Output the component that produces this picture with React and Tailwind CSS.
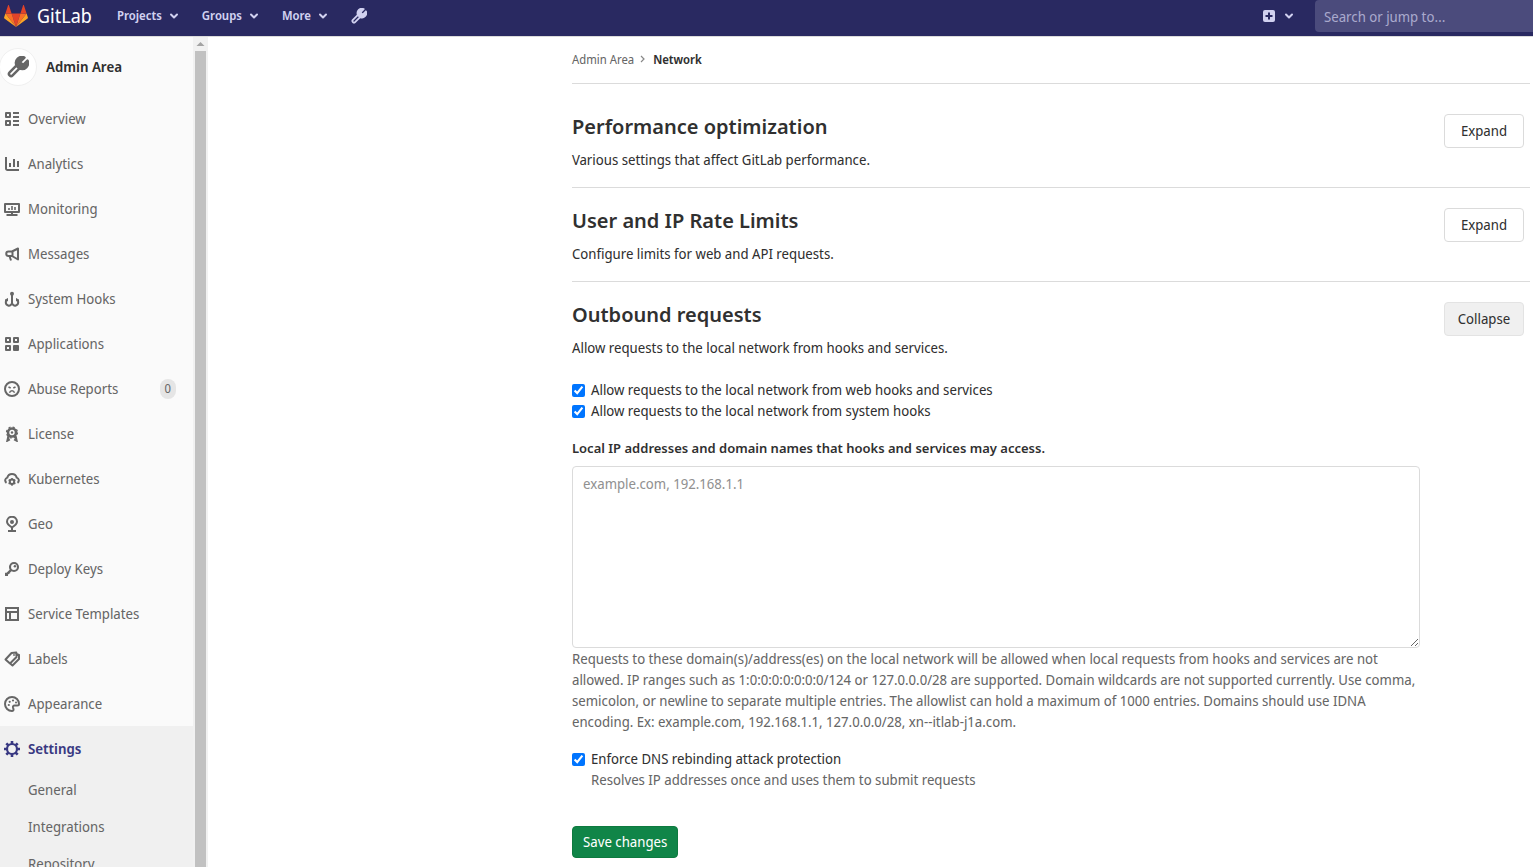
import React from "react";

function Svg({ children, className = "h-4 w-4" }) {
  return (
    <svg viewBox="0 0 16 16" className={className + " shrink-0"} fill="none" stroke="currentColor" strokeWidth="2" aria-hidden="true">
      {children}
    </svg>
  );
}

const WRENCH =
  "M14.7 6.3a1 1 0 0 0 0 1.4l1.6 1.6a1 1 0 0 0 1.4 0l3.77-3.77a6 6 0 0 1-7.94 7.94l-6.91 6.91a2.12 2.12 0 0 1-3-3l6.91-6.91a6 6 0 0 1 7.94-7.94l-3.76 3.76z";

function Wrench({ className }) {
  const clip = React.useId();
  return (
    <svg viewBox="1 1 22 22" className={className + " shrink-0"} fill="none" stroke="currentColor" strokeWidth="2.5" strokeLinejoin="round" aria-hidden="true">
      <clipPath id={clip}>
        <path d="M6 8 16 18 24 18 24 0 6 0z" />
      </clipPath>
      <path d={WRENCH} />
      <path d={WRENCH} fill="currentColor" stroke="none" clipPath={"url(#" + clip + ")"} />
    </svg>
  );
}

const icons = {
  overview: (
    <g>
      <path d="M2 2h4v4H2zM2 10h4v4H2z" strokeLinejoin="round" />
      <path d="M9 2h6M9 6h6M9 10h6M9 14h6" strokeWidth="1.800" />
    </g>
  ),
  chart: (
    <g>
      <path d="M2 1v11.500A1.500 1.500 0 0 0 3.500 14H15" />
      <path d="M6 7v4M10 3v8M14 5v6" />
    </g>
  ),
  monitor: (
    <g>
      <path d="M1 3h14v8H1z" strokeLinejoin="round" />
      <path d="M8 11v3M2.500 14h11" />
      <path d="M5 7v2M8 5v4M11 6v3" strokeWidth="1.600" />
    </g>
  ),
  messages: (
    <g>
      <path d="M14 2.500v11L8 10H4.500a2.200 2.200 0 0 1 0-4.500H8zM8.500 5.500V10" strokeLinejoin="round" />
      <path d="M5.500 10l1.500 4.500" />
    </g>
  ),
  hook: (
    <g>
      <path d="M8 4v10" />
      <circle cx="8" cy="2.700" r="2" fill="currentColor" stroke="none" />
      <path d="M2 8.500v1.500a3 3.500 0 0 0 6 2 3 3.500 0 0 0 6-2V8.500" />
      <path d="M1 9.500 3.500 7.500V10zM15 9.500 12.500 7.500V10z" fill="currentColor" strokeWidth="1" />
    </g>
  ),
  applications: (
    <g strokeLinejoin="round">
      <path d="M2 2h4v4H2zM10 2h4v4h-4zM2 10h4v4H2z" />
      <path d="M10 10h4v4h-4z" fill="currentColor" />
    </g>
  ),
  abuse: (
    <g>
      <circle cx="8" cy="8" r="7" />
      <path d="M5.500 11.700c.4-1.300 1.300-2 2.500-2s2.100.7 2.500 2" strokeWidth="1.500" />
      <path d="M4.500 5.900 6.700 6.900M11.500 5.900l-2.200 1" strokeWidth="1.600" />
    </g>
  ),
  license: (
    <g>
      <circle cx="8" cy="6.500" r="4" strokeWidth="2.600" />
      <circle cx="8" cy="6.500" r="5.500" strokeWidth="1.200" strokeDasharray="2.160 2.160" />
      <circle cx="8" cy="6.500" r="1.200" fill="currentColor" stroke="none" />
      <path d="M4.500 10 3.500 14.500 5.800 13.200M11.500 10l1 4.500-2.300-1.300" strokeWidth="2.200" />
    </g>
  ),
  kubernetes: (
    <g>
      <path d="M2.500 11.800A2.900 2.900 0 0 1 3.300 6.600a4.900 4.900 0 0 1 9.400 0 2.900 2.900 0 0 1 .8 5.200" />
      <circle cx="8" cy="10.700" r="2.200" strokeWidth="2" />
      <path d="M8 6.900v2M8 12.700v2M4.700 8.800l1.600 1M9.800 11.700l1.600 1M11.300 8.800l-1.600 1M6.200 11.700l-1.600 1" strokeWidth="1.600" />
    </g>
  ),
  geo: (
    <g>
      <path d="M8 11.500C5 9.500 3 8 3 5.700a5 5 0 0 1 10 0c0 2.300-2 3.800-5 5.800z" strokeLinejoin="round" />
      <circle cx="8" cy="6" r="2" fill="currentColor" stroke="none" />
      <path d="M8 12v3M4 15h8" />
    </g>
  ),
  key: (
    <g>
      <circle cx="10" cy="6" r="4" strokeWidth="2.100" />
      <path d="M7.200 8.800 2 14" strokeWidth="2.400" />
      <path d="M1 11.800V15h3v-2l2.500-1z" fill="currentColor" stroke="none" />
      <circle cx="10.900" cy="5.200" r="1.200" fill="currentColor" stroke="none" />
    </g>
  ),
  template: (
    <g>
      <path d="M2 2h12v12H2zM2 6h12M6 6v8" />
    </g>
  ),
  labels: (
    <g strokeLinejoin="round">
      <path d="M1.500 8.500 7.500 2l4.800-.5.200 4.500-6.500 6.500zM12.500 3l2.500 1v4L8.500 14.500 5.500 12" />
      <circle cx="10" cy="4" r=".9" fill="currentColor" stroke="none" />
    </g>
  ),
  palette: (
    <g>
      <path d="M8 15A7 7 0 1 1 15 8c0 1-.7 1.500-1.700 1.500H10.500c-1.200 0-1.700.8-1.500 1.800L9.500 13.500c.1.900-.5 1.500-1.500 1.500z" />
      <g fill="currentColor" stroke="none">
        <circle cx="9" cy="4.500" r="1.100" />
        <circle cx="5.700" cy="5.800" r="1.100" />
        <circle cx="4.800" cy="9" r="1.100" />
        <circle cx="12" cy="6.500" r="1" />
      </g>
    </g>
  ),
  settings: (
    <g>
      <circle cx="8" cy="8" r="5" strokeWidth="2.200" />
      <path
        d="M8 0v3M8 13v3M0 8h3M13 8h3M2.300 2.300l2.200 2.200M11.500 11.500l2.200 2.200M2.300 13.700l2.200-2.200M11.500 4.500l2.200-2.200"
        strokeWidth="2.600"
      />
    </g>
  ),
};

const navItems = [
  ["Overview", "overview"],
  ["Analytics", "chart"],
  ["Monitoring", "monitor"],
  ["Messages", "messages"],
  ["System Hooks", "hook"],
  ["Applications", "applications"],
  ["Abuse Reports", "abuse", 0],
  ["License", "license"],
  ["Kubernetes", "kubernetes"],
  ["Geo", "geo"],
  ["Deploy Keys", "key"],
  ["Service Templates", "template"],
  ["Labels", "labels"],
  ["Appearance", "palette"],
];

function Chevron() {
  return (
    <svg viewBox="0 0 10 10" className="h-2.5 w-2.5 shrink-0" fill="none" stroke="currentColor" strokeWidth="2" strokeLinecap="round" strokeLinejoin="round" aria-hidden="true">
      <path d="M2 3.500 5 6.500 8 3.500" />
    </svg>
  );
}

function Logo() {
  return (
    <svg viewBox="0 0 24 22" className="h-[22px] w-6 shrink-0" aria-hidden="true">
      <path d="M12 22 16.400 8.400H7.600z" fill="#e24329" />
      <path d="M12 22 7.600 8.400H1.400z" fill="#fc6d26" />
      <path d="M1.400 8.400.1 12.500c-.1.400 0 .8.300 1L12 22z" fill="#fca326" />
      <path d="M1.400 8.400h6.200L4.900.3c-.1-.4-.7-.4-.8 0z" fill="#e24329" />
      <path d="M12 22 16.400 8.400h6.200z" fill="#fc6d26" />
      <path d="M22.600 8.400l1.300 4.100c.1.400 0 .8-.3 1L12 22z" fill="#fca326" />
      <path d="M22.600 8.400h-6.200L19.100.3c.1-.4.700-.4.800 0z" fill="#e24329" />
    </svg>
  );
}

function Header() {
  return (
    <header className="flex h-[37px] shrink-0 items-start border-b border-[#dbdbdb] bg-[#292961] text-[#d1d1f0]">
      <div className="flex h-8 flex-1 items-center">
        <a href="#home" className="ml-1 flex w-[113px] items-center gap-[9px] text-white">
          <Logo />
          <span className="text-[19px] leading-6">GitLab</span>
        </a>
        <nav className="flex items-center gap-[23px] text-[12px] font-semibold leading-4">
          {["Projects", "Groups", "More"].map((t) => (
            <button key={t} type="button" className="flex items-center gap-[7px]">
              {t}
              <Chevron />
            </button>
          ))}
          <a href="#admin" aria-label="Admin Area">
            <Wrench className="h-4 w-4" />
          </a>
        </nav>
      </div>
      <button type="button" aria-label="New" className="mr-[21px] flex h-8 items-center gap-[9px]">
        <svg viewBox="0 0 12 12" className="h-3 w-3" aria-hidden="true">
          <rect width="12" height="12" rx="2" fill="#d1d1f0" />
          <path d="M6 2.500v7M2.500 6h7" stroke="#292961" strokeWidth="2" />
        </svg>
        <Chevron />
      </button>
      <input
        type="search"
        aria-label="Search or jump to"
        placeholder="Search or jump to…"
        className="h-8 w-[218px] rounded-l bg-[#4b4b7c] px-[9px] text-[14px] text-white outline-none placeholder:text-[#a9a9cc]"
      />
    </header>
  );
}

function Sidebar() {
  return (
    <div className="flex w-[208px] shrink-0 overflow-hidden">
      <aside className="flex-1 overflow-hidden bg-[#fafafa] text-[#666]">
        <a href="#admin" className="flex h-[59px] items-center gap-[9px] text-[#303030]">
          <span className="-ml-px flex h-[38px] w-[38px] items-center justify-center rounded-full border border-[#f0f0f0] bg-white text-[#666]">
            <Wrench className="h-[22px] w-[22px]" />
          </span>
          <span className="font-semibold">Admin Area</span>
        </a>
        <ul>
          {navItems.map(([label, icon, count]) => (
            <li key={label}>
              <a href={"#" + icon} className="flex h-[45px] items-center gap-2 pl-1 pr-[17px]">
                <Svg>{icons[icon]}</Svg>
                <span className="flex-1">{label}</span>
                {count !== undefined && (
                  <span className="rounded-full bg-[#e5e5e5] px-[5px] text-[12px] leading-5">{count}</span>
                )}
              </a>
            </li>
          ))}
          <li className="bg-[#f0f0f0]">
            <a href="#settings" className="flex h-[45px] items-center gap-2 pl-1 font-semibold text-[#393982]">
              <Svg>{icons.settings}</Svg>
              Settings
            </a>
            <ul>
              {["General", "Integrations", "Repository"].map((t) => (
                <li key={t}>
                  <a href={"#" + t} className="flex h-[37px] items-center pl-7">{t}</a>
                </li>
              ))}
            </ul>
          </li>
        </ul>
      </aside>
      <div className="flex w-[15px] flex-col items-center bg-[#f1f1f1]" aria-hidden="true">
        <svg viewBox="0 0 15 14" className="h-3.5 w-[15px] shrink-0">
          <path d="M3.500 9h8l-4-4z" fill="#a3a3a3" />
        </svg>
        <div className="w-[11px] flex-1 bg-[#c1c1c1]" />
      </div>
    </div>
  );
}

function Section({ title, description, open, children, className = "" }) {
  return (
    <section className={"flex items-start gap-6 pr-1.5 pt-5 " + className}>
      <div className="min-w-0 flex-1">
        <h2 className="font-['Noto_Sans',sans-serif] text-[20px] font-semibold leading-[26px]">{title}</h2>
        <p className="mt-[9px]">{description}</p>
        {children}
      </div>
      <button
        type="button"
        className={"h-[34px] w-20 shrink-0 rounded border pb-0.5 " + (open ? "border-[#e3e3e3] bg-[#f0f0f0]" : "border-[#dbdbdb] bg-white")}
      >
        {open ? "Collapse" : "Expand"}
      </button>
    </section>
  );
}

function Check({ children }) {
  return (
    <label className="flex items-start gap-1.5">
      <input type="checkbox" defaultChecked className="mt-[5px] h-[13px] w-[13px] shrink-0" />
      <span>{children}</span>
    </label>
  );
}

export default function App() {
  return (
    <div className="flex h-screen flex-col overflow-hidden bg-white font-['Noto_Sans_Display','Noto_Sans',sans-serif] text-[14px] leading-[21px] text-[#303030]">
      <Header />
      <div className="flex min-h-0 flex-1">
        <Sidebar />
        <main className="min-w-0 flex-1 overflow-hidden pl-[364px] pr-[3px]">
          <nav aria-label="Breadcrumb" className="flex h-[47px] items-center border-b border-[#dbdbdb] pb-0.5 text-[12px]">
            <a href="#admin" className="text-[#666]">Admin Area</a>
            <svg viewBox="0 0 8 8" className="mx-1 h-2 w-2" fill="none" stroke="#888" strokeWidth="1.200" aria-hidden="true">
              <path d="M3 1 6 4 3 7" />
            </svg>
            <a href="#network" className="ml-[3px] font-semibold">Network</a>
          </nav>
          <Section title="Performance optimization" description="Various settings that affect GitLab performance." className="mt-2.5 border-b border-[#dbdbdb] pb-[17px]" />
          <Section title="User and IP Rate Limits" description="Configure limits for web and API requests." className="border-b border-[#dbdbdb] pb-[17px]" />
          <Section title="Outbound requests" description="Allow requests to the local network from hooks and services." open>
            <form className="mt-[21px]">
              <Check>Allow requests to the local network from web hooks and services</Check>
              <Check>Allow requests to the local network from system hooks</Check>
              <label htmlFor="allowlist" className="mt-[17px] block font-['Noto_Sans',sans-serif] text-[13px] font-semibold">
                Local IP addresses and domain names that hooks and services may access.
              </label>
              <textarea
                id="allowlist"
                placeholder="example.com, 192.168.1.1"
                className="mt-[7px] block h-[182px] w-full resize rounded border border-[#dbdbdb] px-2.5 py-1.5 outline-none placeholder:text-[#919191]"
              />
              <p className="text-[#666]">
                Requests to these domain(s)/address(es) on the local network will be allowed when local requests from hooks and services are not allowed. IP ranges such as 1:0:0:0:0:0:0:0/124 or 127.0.0.0/28 are supported. Domain wildcards are not supported currently. Use comma, semicolon, or newline to separate multiple entries. The allowlist can hold a maximum of 1000 entries. Domains should use IDNA encoding. Ex: example.com, 192.168.1.1, 127.0.0.0/28, xn--itlab-j1a.com.
              </p>
              <div className="mt-4">
                <Check>
                  Enforce DNS rebinding attack protection
                  <span className="block text-[#666]">Resolves IP addresses once and uses them to submit requests</span>
                </Check>
              </div>
              <button type="submit" className="mt-9 h-8 rounded-sm border border-[#0e7a3f] bg-[#108548] px-2.5 pb-0.5 text-white">
                Save changes
              </button>
            </form>
          </Section>
        </main>
      </div>
    </div>
  );
}
